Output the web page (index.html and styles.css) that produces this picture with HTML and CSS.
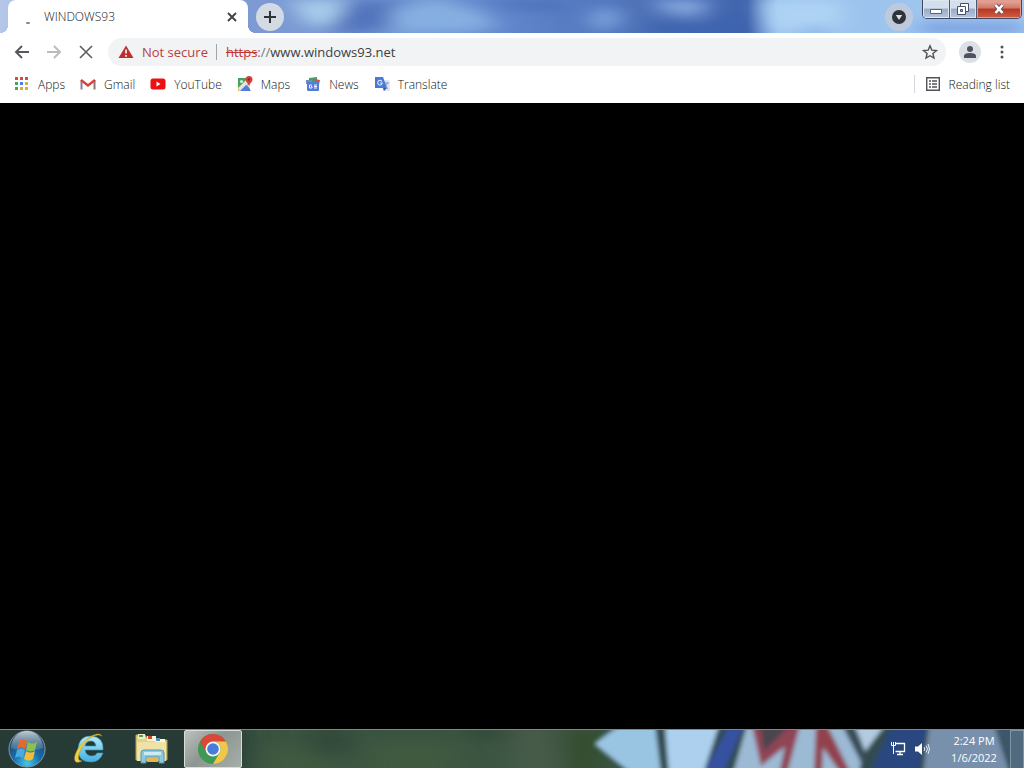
FILE: index.html
```html
<!DOCTYPE html>
<html lang="en">
<head>
<meta charset="utf-8">
<meta name="viewport" content="width=device-width, initial-scale=1">
<title>WINDOWS93</title>
<link rel="stylesheet" href="styles.css">
</head>
<body>
<div class="browser">
  <header class="tab-strip">
    <svg class="backdrop" viewBox="0 0 1024 34" preserveAspectRatio="none" aria-hidden="true">
      <defs>
        <filter id="cloud" x="-30%" y="-80%" width="160%" height="260%"><feGaussianBlur stdDeviation="11 6"/></filter>
        <linearGradient id="sky" x2="1" y2="0">
          <stop offset="0" stop-color="#b5c7e8"/><stop offset=".24" stop-color="#7d9ad3"/><stop offset=".38" stop-color="#7397d4"/><stop offset=".5" stop-color="#6085cb"/><stop offset=".63" stop-color="#4d70b6"/><stop offset=".73" stop-color="#4164ae"/><stop offset=".76" stop-color="#97c1ec"/><stop offset="1" stop-color="#a4c8f0"/>
        </linearGradient>
      </defs>
      <path fill="url(#sky)" d="M0 0h1024v34H0z"/>
      <g filter="url(#cloud)">
        <path fill="#a8cceb" d="M290 0h62l-4 26h-40z"/>
        <path fill="#5275bd" d="M348 0h50l50 10-30 10-50 14h-40z"/>
        <path fill="#86afe1" d="M390 10l45-12 45 14 20 16-40 6h-65z"/>
        <path fill="#4c71bb" d="M475 0h90v12l-50-3z"/>
        <path fill="#7aa0db" d="M590 14l20-8 12 10-6 14h-26z"/>
        <path fill="#88aae0" d="M650 0h60l-10 17-34-4z"/>
        <path fill="#3c63b0" d="M650 22l65 2 20-16 12 28h-96z"/>
        <path fill="#aed3f4" d="M762 0h80v34h-70z"/>
        <path fill="#719ade" d="M796 32l24-4 16 6h-40zM920 24h104v10H920z"/>
      </g>
    </svg>
    <div class="tab">
      <span class="spinner"></span>
      <span class="tab-title">WINDOWS93</span>
      <button class="tab-close" aria-label="Close tab"><svg width="10" height="10" viewBox="0 0 10 10"><path d="M1 1l8 8M9 1L1 9" stroke="#3c4043" stroke-width="1.800"/></svg></button>
    </div>
    <button class="round-button new-tab" aria-label="New tab"><svg width="14" height="14" viewBox="0 0 14 14"><path d="M7 1v12M1 7h12" stroke="#303236" stroke-width="2"/></svg></button>
    <button class="round-button tab-search" aria-label="Search tabs"><svg width="14" height="14" viewBox="0 0 14 14"><circle cx="7" cy="7" r="7" fill="#303338"/><path d="M3.800 5h6.400L7 10z" fill="#dce3ed"/></svg></button>
    <div class="window-controls">
      <button class="caption-button" aria-label="Minimize"><svg width="14" height="14" viewBox="0 0 14 14"><path d="M1.500 7.500h11v4h-11z" fill="#fff" stroke="#53637c"/></svg></button>
      <button class="caption-button" aria-label="Restore"><svg width="14" height="14" viewBox="0 0 14 14"><g fill="#fff" stroke="#46536a"><path d="M4.500 1.500h8v8h-8z"/><path d="M1.500 4.500h8v8h-8z"/><path d="M4.500 7.500h2v2h-2z" fill="#aab9d0"/></g></svg></button>
      <button class="caption-button close-window" aria-label="Close"><svg width="14" height="12" viewBox="0 0 14 12"><path d="M3.500 2l7 8M10.500 2l-7 8" stroke="#68545a" stroke-width="4.200"/><path d="M3.500 2l7 8M10.500 2l-7 8" stroke="#fff" stroke-width="2.600"/></svg></button>
    </div>
  </header>

  <div class="toolbar">
    <div class="nav-buttons">
      <button aria-label="Back"><svg width="16" height="16" viewBox="0 0 16 16"><path d="M15 8H2M8 2L2 8l6 6" fill="none" stroke="#55585c" stroke-width="1.900"/></svg></button>
      <button aria-label="Forward"><svg width="16" height="16" viewBox="0 0 16 16"><path d="M1 8h13M8 2l6 6-6 6" fill="none" stroke="#b9bbbd" stroke-width="1.900"/></svg></button>
      <button aria-label="Stop loading"><svg width="16" height="16" viewBox="0 0 16 16"><path d="M2 2l12 12M14 2L2 14" stroke="#5a5d61" stroke-width="1.600"/></svg></button>
    </div>
    <div class="address-bar">
      <button class="security"><svg width="16" height="16" viewBox="0 0 16 16"><path d="M8 1.500L15.500 14H.5z" fill="#bd2f2e"/><path d="M8 5.500v4M8 11v1.700" stroke="#fff" stroke-width="1.600"/></svg><span>Not secure</span></button>
      <div class="url"><s>https</s><span class="slashes">://</span>www.windows93.net</div>
      <button class="bookmark-star" aria-label="Bookmark this page"><svg width="16" height="16" viewBox="0 0 16 16"><path d="M8 1.800l1.800 4.300 4.700.4-3.600 3 1.100 4.600L8 11.700l-4 2.400 1.100-4.600-3.600-3 4.700-.4z" fill="none" stroke="#505357" stroke-width="1.400"/></svg></button>
    </div>
    <button class="profile" aria-label="Profile"><svg width="14" height="14" viewBox="0 0 14 14"><circle cx="7" cy="4" r="3" fill="#4d535d"/><path d="M1 13v-2q0-3 6-3t6 3v2z" fill="#4d535d"/></svg></button>
    <button class="menu" aria-label="Menu"><svg width="4" height="14" viewBox="0 0 4 14"><g fill="#505357"><circle cx="2" cy="2" r="1.500"/><circle cx="2" cy="7" r="1.500"/><circle cx="2" cy="12" r="1.500"/></g></svg></button>
  </div>

  <nav class="bookmarks" aria-label="Bookmarks">
    <a href="#"><svg width="16" height="16" viewBox="0 0 16 16"><path d="M1 1h3v3H1zM6 1h3v3H6zM11 1h3v3h-3z" fill="#d34c45"/><path d="M1 6h3v3H1z" fill="#48a35d"/><path d="M6 6h3v3H6z" fill="#4c7fe0"/><path d="M11 6h3v3h-3zM6 11h3v3H6zM11 11h3v3h-3z" fill="#d9b036"/><path d="M1 11h3v3H1z" fill="#48a35d"/></svg>Apps</a>
    <a href="#"><svg width="16" height="16" viewBox="0 0 16 16"><path d="M1.500 13.500V4" stroke="#897c9d" stroke-width="2"/><path d="M14.500 13.500V4" stroke="#91776f" stroke-width="2"/><path d="M1 4l7 5.500L15 4" fill="none" stroke="#d84339" stroke-width="2.400"/></svg>Gmail</a>
    <a href="#"><svg width="16" height="16" viewBox="0 0 16 16"><rect x=".5" y="2.500" width="15" height="11" rx="2.500" fill="#ee1010"/><path d="M6.500 5.500v5l4-2.500z" fill="#fff"/></svg>YouTube</a>
    <a href="#"><svg width="16" height="16" viewBox="0 0 16 16"><path d="M1 2h12v13H1z" fill="#49a15b"/><path d="M1 12L10 3l2 4-8 8H1z" fill="#e2e5de"/><path d="M1 12l2 3H1z" fill="#e8bf4a"/><path d="M3 15l6-6 5 6z" fill="#557bdf"/><path d="M10 9l3-1v5z" fill="#e2e5de"/><circle cx="4.500" cy="5.500" r="1.600" fill="#d7eadc"/><path d="M12 0a3.500 3.500 0 0 0-3.500 3.500C8.500 6 11 7 12 10c1-3 3.500-4 3.500-6.500A3.500 3.500 0 0 0 12 0z" fill="#d64037"/><circle cx="12" cy="3.500" r="1.200" fill="#822b27"/></svg>Maps</a>
    <a href="#"><svg width="16" height="16" viewBox="0 0 16 16"><path d="M4 2l8-1v5H4z" fill="#4b9b64"/><path d="M10 3l5 1-1 5h-4z" fill="#cf554f"/><path d="M1 4h6v4H1z" fill="#6f91b9"/><rect x="2" y="6" width="12" height="9" rx="1" fill="#537cdd"/><path d="M7 9H4.500v3H7v-1.500H6M9 9h3M9 10.500h3M9 12h3" fill="none" stroke="#edf3ff"/></svg>News</a>
    <a href="#"><svg width="16" height="16" viewBox="0 0 16 16"><path d="M6 4h8l2 1v10H9z" fill="#e2e6ee"/><path d="M1 1h8l4 11H1z" fill="#4779d8"/><path d="M9 12h4l-3 3z" fill="#355bab"/><path d="M8 5.500A2.300 2.300 0 1 0 8.300 7H6" fill="none" stroke="#d5e3fc" stroke-width="1.200"/><path d="M11 7h4M13 6v1q0 2-1 3l2 3" fill="none" stroke="#8aa1bd"/></svg>Translate</a>
    <button class="reading-list"><svg width="16" height="16" viewBox="0 0 16 16"><path d="M1.700 1.700h12.600v12.600H1.700z" fill="none" stroke="#505357" stroke-width="1.400"/><path d="M4 5h2M4 8h2M4 11h2M7 5h5M7 8h5M7 11h5" stroke="#505357" stroke-width="1.300"/></svg>Reading list</button>
  </nav>
  <main class="page"></main>
</div>

<footer class="taskbar">
  <svg class="backdrop" viewBox="0 0 1024 39" preserveAspectRatio="none" aria-hidden="true">
    <defs>
      <filter id="soft" x="-20%" y="-20%" width="140%" height="140%"><feGaussianBlur stdDeviation="2"/></filter>
      <filter id="leaf" x="-20%" y="-80%" width="140%" height="260%"><feGaussianBlur stdDeviation="14 6"/></filter>
    </defs>
    <path fill="#3a5441" d="M0 0h1024v39H0z"/>
    <g filter="url(#leaf)">
      <path fill="#283a34" d="M-40-10h285v60H-40z"/><path fill="#415a40" d="M270 22l40-9 30 36h-90zM370 14h80l15 35h-100z"/><path fill="#465b48" d="M510-10h40l20 60h-60z"/><path fill="#30483b" d="M310-5h40v30h-40zM470-5h40v15h-40z"/><path fill="#314b2c" d="M568 0h30v49h-30z"/>
    </g>
    <g filter="url(#soft)">
      <path fill="#304b51" d="M610-5h420v50H625l-31-30z"/>
      <path fill="#9ac5e2" d="M620-5h35l6 50h-29l-38-31z"/>
      <path fill="#acd0ee" d="M665-5h54l-16 50h-34z"/>
      <path fill="#3451a0" d="M729-5h15l-21 50h-20z"/>
      <path fill="#9cbad4" d="M747-5h120l-8 50H733z"/>
      <path fill="#4c4550" d="M753-5h40l-31 32z"/>
      <path fill="#8f4454" d="M752-5h8l4 27 26-27h10l-13 50h-8l6-28-24 20z"/>
      <path fill="#91424e" d="M816-5h11l24 50h-10l-18-27-1 27h-8z"/>
      <path fill="#394d59" d="M842-5h12l14 31-4 13z"/>
      <path fill="#b2cbe0" d="M855-5h30l-20 27z"/>
      <path fill="#2c477f" d="M892-5h36l-10 50h-49z"/>
      <path fill="#7890ab" d="M929-5h65l16 50h-87z"/>
      <path fill="#3e566a" d="M994-5h36v50h-16z"/>
    </g>
  </svg>
  <button class="start" aria-label="Start"><svg width="40" height="40" viewBox="0 0 40 40">
    <defs><radialGradient id="orb" cy=".9" r=".85"><stop stop-color="#42c9ed"/><stop offset=".45" stop-color="#186bab"/><stop offset="1" stop-color="#243e5a"/></radialGradient><linearGradient id="orb-shine" x2="0" y2="1"><stop stop-color="#d1dce2" stop-opacity=".9"/><stop offset="1" stop-color="#92a8b5" stop-opacity=".2"/></linearGradient></defs>
    <circle cx="20" cy="20" r="18" fill="url(#orb)" stroke="#8198a6"/><path d="M4 19a16 17 0 0 1 32 0q-16 7-32 0z" fill="url(#orb-shine)"/>
    <path d="M13 11q3-2 7 1l-2 8q-4-3-8 0z" fill="#e8672c"/><path d="M21 13q4 3 9 0l-2 8q-4 3-9 0z" fill="#8bc24b"/><path d="M10 21q4-3 8 0l-2 8q-4-3-8 0z" fill="#49aae4"/><path d="M19 22q4 3 9 0l-2 8q-4 3-9 0z" fill="#f5bd35"/></svg></button>
  <button class="task" aria-label="Internet Explorer"><svg width="36" height="34" viewBox="0 0 36 34">
    <defs><linearGradient id="ie" x2="0" y2="1"><stop stop-color="#b4ecfa"/><stop offset="1" stop-color="#42afe0"/></linearGradient></defs>
    <path d="M32 18H14q1 6 7 6 4 0 5-3h6q-3 9-12 9Q7 30 7 17 8 4 20 4q13 1 12 14zm-18-4h11q-1-5-5-5-5 0-6 5z" fill="url(#ie)" fill-rule="evenodd" stroke="#3c94bd" stroke-width=".6"/>
    <path d="M31 4q-3-5-14 2C6 14 1 27 5 30q2 1 6-1-5 0-3-7Q13 8 23 4q5-2 8 0z" fill="#efcf43" stroke="#b5972e" stroke-width=".5"/></svg></button>
  <button class="task" aria-label="Windows Explorer"><svg width="36" height="34" viewBox="0 0 36 34">
    <path d="M3 3h9l2 3h9l2 2h9v20H3z" fill="#e5d28a" stroke="#b8a35d"/><path d="M5 2h7v5H5z" fill="#f5edbd"/><path d="M14 4h9v5h-9zM22 7h10v4H22z" fill="#fff8d6"/><path d="M6 3h4v2H6z" fill="#55a352"/><path d="M15 4h4v3h-4z" fill="#d74335"/><path d="M23 6h4v3h-4z" fill="#4f91c4"/><path d="M4 10h29v19H4z" fill="#efe2a5"/><path d="M8 31V21q0-3 3-3h17q3 0 3 3v10h-5v-6H13v6z" fill="#8ac9df" stroke="#5696b1"/><path d="M11 20h17v3H11z" fill="#ccecf2"/><path d="M14 26h11v4H14z" fill="#eab54d"/></svg></button>
  <button class="task active" aria-label="Google Chrome"><svg width="32" height="32" viewBox="0 0 32 32">
    <circle cx="16" cy="16" r="15" fill="#3f9853"/><path d="M3 8.500A15 15 0 0 1 29 8.500H16a7.500 7.500 0 0 0-6.500 11.200z" fill="#d9483b"/><path d="M29 8.500a15 15 0 0 1-13 22.500l6.500-11.300A7.500 7.500 0 0 0 16 8.500z" fill="#f1c64a"/><circle cx="16" cy="16" r="7.500" fill="#f7f7f2"/><circle cx="16" cy="16" r="5.800" fill="#477cdb"/></svg></button>
  <div class="tray">
    <div class="tray-icons">
      <button aria-label="Network"><svg width="16" height="16" viewBox="0 0 16 16"><path d="M6 2.500h8.500v8H5.500M10 10.500v3M7 13.500h6" fill="none" stroke="#fff" stroke-width="1.300"/><path d="M1.500 1v3.500h4V1M3.500 1v12" fill="none" stroke="#fff"/></svg></button>
      <button aria-label="Volume"><svg width="16" height="16" viewBox="0 0 16 16"><path d="M1 5.500h3L8 2v12l-4-3.500H1z" fill="#fff"/><path d="M10 6q1.500 2 0 4M12 4.500q3 3.500 0 7M14 3q3 5 0 10" fill="none" stroke="#e8eef7"/></svg></button>
    </div>
    <button class="clock"><span>2:24 PM</span><span>1/6/2022</span></button>
    <button class="show-desktop" aria-label="Show desktop"></button>
  </div>
</footer>
</body>
</html>
```
FILE: styles.css
```css
* { box-sizing: border-box; }
body {
  margin: 0;
  min-height: 100vh;
  display: flex;
  flex-direction: column;
  background: #000;
  font-family: "Open Sans", "Noto Sans", sans-serif;
  font-size: 12px;
  font-weight: 300;
  color: #141518;
}
button {
  display: flex;
  align-items: center;
  justify-content: center;
  flex: none;
  margin: 0;
  padding: 0;
  border: 0;
  background: none;
  font: inherit;
  color: inherit;
}
svg { display: block; flex: none; }
.browser { flex: 1; display: flex; flex-direction: column; }
.backdrop { position: absolute; inset: 0; width: 100%; height: 100%; z-index: -1; }

.tab-strip {
  position: relative;
  isolation: isolate;
  overflow: hidden;
  display: flex;
  align-items: flex-start;
  height: 33px;
  padding-left: 8px;
}
.tab {
  position: relative;
  display: flex;
  align-items: center;
  width: 240px;
  height: 33px;
  padding: 0 10px 0 18px;
  border-radius: 8px 8px 0 0;
  background: #fff;
}
.tab::before,
.tab::after {
  content: "";
  position: absolute;
  bottom: 0;
  width: 8px;
  height: 8px;
}
.tab::before { right: 100%; background: radial-gradient(circle at 0 0, transparent 8px, #fff 8px); }
.tab::after { left: 100%; background: radial-gradient(circle at 100% 0, transparent 8px, #fff 8px); }
.spinner { width: 4px; height: 2px; margin-top: 13px; border-radius: 1px; background: #7c8ba9; }
.tab-title { flex: 1; margin-left: 14px; }
.tab-close { width: 12px; height: 16px; }
.round-button { width: 28px; height: 28px; border-radius: 50%; background: #d3dae3; }
.new-tab { margin: 3px 0 0 8px; }
.tab-search { margin: 3px 9px 0 auto; background: #bdcadd; }
.window-controls {
  display: flex;
  height: 19px;
  margin-right: 2px;
  border: 1px solid #3e4961;
  border-top: 0;
  border-radius: 0 0 5px 5px;
  overflow: hidden;
}
.caption-button {
  width: 27px;
  border-right: 1px solid #4b576f;
  background: linear-gradient(#d4dfed 0 45%, #9cabc4 50%, #b4c7e2);
  box-shadow: inset 0 0 0 1px #dce6f3;
}
.close-window { width: 44px; border: 0; background: linear-gradient(#e3aaa0, #d17768 45%, #b83722 50%, #cd5d43); box-shadow: inset 0 0 0 1px #e39c8d; }

.toolbar { display: flex; align-items: center; height: 37px; padding-right: 18px; background: #fff; }
.nav-buttons { display: flex; gap: 16px; padding: 0 14px; }
.address-bar {
  flex: 1;
  display: flex;
  align-items: center;
  height: 28px;
  padding: 0 8px 0 10px;
  border-radius: 14px;
  background: #f1f3f4;
  font-size: 13px;
  font-weight: 400;
}
.security { gap: 8px; padding-right: 8px; border-right: 1px solid #a1a6ad; line-height: 16px; color: #b7413f; }
.url { flex: 1; padding-left: 9px; color: #3c4043; }
.url s { color: #c03835; }
.slashes { color: #73777b; }
.profile { width: 22px; height: 22px; margin-left: 13px; border-radius: 50%; background: #dce0e6; }
.menu { width: 8px; margin-left: 17px; }

.bookmarks { display: flex; align-items: center; gap: 15px; height: 33px; padding: 0 14px 5px; background: #fff; }
.bookmarks a { display: flex; align-items: center; gap: 8px; color: inherit; text-decoration: none; }
.reading-list { gap: 8px; height: 18px; margin-left: auto; padding-left: 10px; border-left: 1px solid #d4d6d9; }
.page { flex: 1; background: #000; }

.taskbar {
  position: relative;
  isolation: isolate;
  display: flex;
  align-items: center;
  height: 39px;
  border-top: 1px solid #7b8e85;
  overflow: hidden;
}
.start { width: 54px; }
.task { width: 58px; height: 38px; margin-left: 4px; }
.start + .task { margin-left: 6px; }
.active { border: 1px solid #d7ddda; border-radius: 2px; background: linear-gradient(135deg, #bdc2bf, #8d9691 45%, #a7aea9); }
.tray { display: flex; align-items: center; align-self: stretch; margin-left: auto; color: #fff; }
.tray-icons { display: flex; gap: 8px; padding-right: 8px; }
.clock { flex-direction: column; width: 72px; line-height: 17px; font-weight: 400; font-size: 11px; }
.show-desktop { align-self: stretch; width: 14px; border: 1px solid #8095a6; border-bottom: 0; background: #acbdcb33; }
```
